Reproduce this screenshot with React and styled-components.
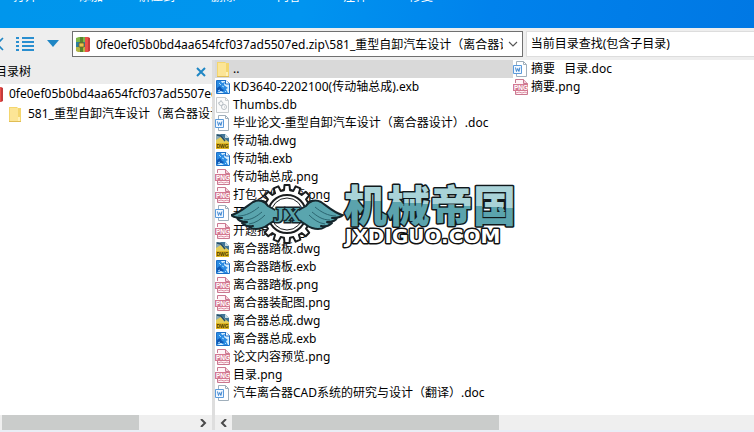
import { useState } from "react";
import styled, { createGlobalStyle } from "styled-components";

const ARCHIVE = "0fe0ef05b0bd4aa654fcf037ad5507ed.zip";
const FOLDER = "581_重型自卸汽车设计（离合器设计）";

const ACTIONS = ["打开", "添加", "解压到", "删除", "内容", "注释", "修复"];

const FILES = [
  { name: "..", type: "folder" },
  { name: "KD3640-2202100(传动轴总成).exb", type: "exb" },
  { name: "Thumbs.db", type: "db" },
  { name: "毕业论文-重型自卸汽车设计（离合器设计）.doc", type: "doc" },
  { name: "传动轴.dwg", type: "dwg" },
  { name: "传动轴.exb", type: "exb" },
  { name: "传动轴总成.png", type: "png" },
  { name: "打包文件预览.png", type: "png" },
  { name: "开题报告.doc", type: "doc" },
  { name: "开题报告.png", type: "png" },
  { name: "离合器踏板.dwg", type: "dwg" },
  { name: "离合器踏板.exb", type: "exb" },
  { name: "离合器踏板.png", type: "png" },
  { name: "离合器装配图.png", type: "png" },
  { name: "离合器总成.dwg", type: "dwg" },
  { name: "离合器总成.exb", type: "exb" },
  { name: "论文内容预览.png", type: "png" },
  { name: "目录.png", type: "png" },
  { name: "汽车离合器CAD系统的研究与设计（翻译）.doc", type: "doc" },
  { name: "摘要   目录.doc", type: "doc" },
  { name: "摘要.png", type: "png" },
];

export default function App() {
  const [path, setPath] = useState(`${ARCHIVE}\\${FOLDER}`);
  const [keyword, setKeyword] = useState("");
  const [selected, setSelected] = useState("..");

  return (
    <Window>
      <GlobalStyle />

      <ActionBar>
        {ACTIONS.map((label) => (
          <ActionButton key={label} type="button">{label}</ActionButton>
        ))}
      </ActionBar>

      <AddressRow>
        <NavGroup>
          <NavButton type="button" aria-label="后退" $width={8}><BackIcon /></NavButton>
          <NavButton type="button" aria-label="列表视图" $width={34}><ListIcon /></NavButton>
          <NavButton type="button" aria-label="视图选项" $width={22}><TriangleIcon /></NavButton>
        </NavGroup>
        <AddressBox>
          <ArchiveIcon />
          <AddressInput aria-label="地址" value={path} onChange={(e) => setPath(e.target.value)} />
          <DropButton type="button" aria-label="展开地址">
            <svg width="10" height="6" viewBox="0 0 10 6" fill="none">
              <path d="M1 1l4 4 4-4" stroke="#555" strokeWidth="1.1" />
            </svg>
          </DropButton>
        </AddressBox>
        <SearchInput
          aria-label="查找"
          placeholder="当前目录查找(包含子目录)"
          value={keyword}
          onChange={(e) => setKeyword(e.target.value)}
        />
      </AddressRow>

      <Body>
        <TreePane>
          <TreeHeader>
            <TreeTitle>目录树</TreeTitle>
            <CloseButton type="button" aria-label="关闭目录树">
              <svg width="10" height="10" viewBox="0 0 10 10">
                <path d="M1 1l8 8M9 1L1 9" stroke="#1f86c4" strokeWidth="2" />
              </svg>
            </CloseButton>
          </TreeHeader>
          <Tree>
            <TreeRow $level={0}><ArchiveIcon /><span>{ARCHIVE}</span></TreeRow>
            <TreeRow $level={1}><FileIcon type="folder" /><span>{FOLDER}</span></TreeRow>
          </Tree>
          <ScrollTrack>
            <Thumb $start={2} $size="64.6%" />
            <ArrowButton type="button" aria-label="向右滚动" $end><Chevron right /></ArrowButton>
          </ScrollTrack>
        </TreePane>

        <FilePane>
          <FileList>
            {FILES.map((f) => (
              <FileRow key={f.name} $active={f.name === selected} onClick={() => setSelected(f.name)}>
                <FileIcon type={f.type} />
                <FileName>{f.name}</FileName>
              </FileRow>
            ))}
          </FileList>
          <Watermark />
          <ScrollTrack>
            <ArrowButton type="button" aria-label="向左滚动"><Chevron /></ArrowButton>
            <Thumb $start={0} $size="49.6%" />
          </ScrollTrack>
        </FilePane>
      </Body>
    </Window>
  );
}

function BackIcon() {
  return (
    <svg width="8" height="14" viewBox="0 0 8 14" fill="none">
      <path d="M3 1L-3 7l6 6" stroke="#1f86c4" strokeWidth="1.6" />
    </svg>
  );
}

function ListIcon() {
  return (
    <svg width="18" height="14" viewBox="0 0 18 14" fill="#2a8fd0">
      <path d="M0 0h3v2H0zM6 0h12v2H6zM0 4h3v2H0zM6 4h12v2H6zM0 8h3v2H0zM6 8h12v2H6zM0 12h3v2H0zM6 12h12v2H6z" />
    </svg>
  );
}

function TriangleIcon() {
  return (
    <svg width="12" height="8" viewBox="0 0 12 8">
      <path d="M0 0h12L6 7z" fill="#1f86c4" />
    </svg>
  );
}

function Chevron({ right }) {
  return (
    <svg width="7" height="8" viewBox="0 0 7 8" fill="none">
      <path d={right ? "M1 0l4 4-4 4" : "M6 0L2 4l4 4"} stroke="#4a4a4a" strokeWidth="2" />
    </svg>
  );
}

function ArchiveIcon() {
  return (
    <IconSvg width="15" height="17" viewBox="0 0 15 17">
      <path d="M0 2l3-1h6v5H0z" fill="#7db548" />
      <path d="M0 6h9v5H0z" fill="#2e7f9c" />
      <path d="M0 11h9v5H2l-2-1z" fill="#b3b545" />
      <path d="M9 1h3v15H9z" fill="#ec4f49" />
      <path d="M12 1l2 1v13l-2 1z" fill="#c33b3b" />
      <path d="M4 1h3v15H4z" fill="#57822f" />
      <path d="M3 7h5v4H3z" fill="#e6c34d" stroke="#745b22" strokeWidth=".8" />
    </IconSvg>
  );
}

function FileIcon({ type }) {
  if (type === "folder") {
    return (
      <IconSvg width="16" height="16" viewBox="0 0 16 16">
        <path d="M2 1h8l1 1h3v14H2z" fill="#f4d66e" />
        <path d="M3 2h8v13H3z" fill="#fce596" />
        <path d="M11 11h2v4h-2z" fill="#fff1b8" />
        <path d="M2 15h12v1H2z" fill="#e0bd55" />
      </IconSvg>
    );
  }
  if (type === "exb") {
    return (
      <IconSvg width="16" height="16" viewBox="0 0 16 16">
        <path d="M1.500 1.500h9l4 3v10h-13z" fill="#d8efff" stroke="#1b6fc6" />
        <path d="M2 2h4l1 2 3-1-1 3 4 3-2 1 2 4H9l-3-2-4 2z" fill="#2b8be2" />
        <path d="M2 9l3-2 2 3 2 1-1 1H5l-3 1z" fill="#0d57b4" />
        <path d="M4 4l2 2M7 7l2 1M3 12l2-1M10 12l1 1" stroke="#a9deff" />
        <path d="M10.500 1v4h4" fill="#fff" stroke="#1b6fc6" />
      </IconSvg>
    );
  }
  if (type === "dwg") {
    return (
      <IconSvg width="16" height="16" viewBox="0 0 16 16">
        <path d="M1 1h9l4 4v6H1z" fill="#3f7597" />
        <path d="M1 1h4l9 9v1H1z" fill="#8caab5" />
        <path d="M1 7l5-3 8 5v2H1z" fill="#e5ce57" />
        <path d="M2 2l4 1 4 5" stroke="#234c6b" strokeWidth="1.500" fill="none" />
        <path d="M10 1l4 4h-4z" fill="#c9dbe2" />
        <path d="M1 10h13v6H1z" fill="#dfb722" />
        <text x="1.500" y="15" fontFamily="Liberation Sans" fontWeight="700" fontSize="5" fill="#4c3900">DWG</text>
      </IconSvg>
    );
  }
  if (type === "png") {
    return (
      <IconSvg width="16" height="16" viewBox="0 0 16 16">
        <path d="M2.500 4V.5h8l4 4V15.500h-12V12" fill="#fff4f7" stroke="#ca7890" />
        <path d="M10.500.5v4h4" fill="#f4ccd7" stroke="#ca7890" />
        <path d="M0 5h15v7H0z" fill="#d47991" />
        <text x="1" y="11" fontFamily="Liberation Sans" fontWeight="700" fontSize="6.500" fill="#fff">PNG</text>
        <path d="M3 14l3-1 3 1 3-1 2 1" stroke="#dd91a5" fill="none" />
      </IconSvg>
    );
  }
  if (type === "doc") {
    return (
      <IconSvg width="16" height="16" viewBox="0 0 16 16">
        <path d="M3.500.5h7l3 3v12h-10z" fill="#fff" stroke="#a0afbb" />
        <path d="M10.500.5v3h3" fill="none" stroke="#a0afbb" />
        <path d="M.5 4.500h8v8h-8z" fill="#f2f8ff" stroke="#5b9bdc" />
        <path d="M2.500 6.500l1 4 1.200-3 1.200 3 1-4" fill="none" stroke="#3f86d0" />
      </IconSvg>
    );
  }
  return (
    <IconSvg width="16" height="16" viewBox="0 0 16 16">
      <path d="M1.500.5h9l3 3v12h-12z" fill="#fbfbfb" stroke="#c8ccce" />
      <path d="M10.500.5v3h3" fill="none" stroke="#c8ccce" />
      <circle cx="6" cy="6.500" r="2" fill="none" stroke="#b9c0c6" />
      <circle cx="9" cy="10" r="2.500" fill="none" stroke="#b9c0c6" />
      <path d="M3 6h1M6 3v1M9 10h1" stroke="#b9c0c6" />
    </IconSvg>
  );
}

// outline of a toothed wheel around (cx, cy)
function gearPath(cx, cy, outer, inner, teeth) {
  const points = [];
  const step = (Math.PI * 2) / teeth;
  for (let i = 0; i < teeth; i++) {
    [[-0.32, inner], [-0.22, outer], [0.22, outer], [0.32, inner]].forEach(([k, r]) => {
      const a = (i + k) * step - Math.PI / 2;
      points.push(`${(cx + r * Math.cos(a)).toFixed(1)} ${(cy + r * Math.sin(a)).toFixed(1)}`);
    });
  }
  return `M${points.join("L")}Z`;
}

function Wing() {
  return (
    <>
      <path
        d="M1 34C10 31 16 25 22 21c6-3 12-1 15 4l9 5v10c-6-1-8 5-15 7-6 2-10 1-13-1 2 0 3-1 4-1-5 1-9-1-11-3 2 0 3 0 5-1-6 0-9-2-10-4h5c-5 0-9-1-11-3z"
        fill="#5aa5ae"
        stroke="#15262c"
        strokeWidth="2"
        strokeLinejoin="round"
      />
      <path d="M7 35c8 0 15-4 21-9M13 39c8 0 13-4 18-8M18 43c7-1 12-5 16-9" stroke="#2b6570" fill="none" />
    </>
  );
}

function Watermark() {
  return (
    <WatermarkSvg width="292" height="68" viewBox="0 0 292 68" role="img" aria-label="机械帝国 JXDIGUO.COM">
      <defs>
        <linearGradient id="title" gradientUnits="userSpaceOnUse" x1="202" y1="3" x2="200" y2="43">
          <stop offset="0.5" stopColor="#a9d3d8" />
          <stop offset="0.5" stopColor="#5ba3ad" />
        </linearGradient>
      </defs>
      <path d={gearPath(56, 33, 29, 24, 16)} fill="#fff" stroke="#1a1d1f" strokeWidth="2" strokeLinejoin="round" />
      <circle cx="56" cy="33" r="19" fill="#fff" stroke="#1a1d1f" strokeWidth="2" />
      <circle cx="56" cy="33" r="16" fill="none" stroke="#1a1d1f" strokeWidth="1" />
      <Wing />
      <g transform="matrix(-1 0 0 1 112 0)"><Wing /></g>
      <path d="M44 26h24v14H44z" fill="#5aa5ae" />
      <EmblemText x="56" y="41" textAnchor="middle">JX</EmblemText>
      <TitleText x="113" y="41">机械帝国</TitleText>
      <DomainText x="114" y="62">JXDIGUO.COM</DomainText>
    </WatermarkSvg>
  );
}

const GlobalStyle = createGlobalStyle`
  * { box-sizing: border-box; }
  body {
    margin: 0;
    overflow: hidden;
    background: #fff;
  }
  button, input {
    font: inherit;
    color: inherit;
  }
`;

const Window = styled.div`
  height: 100vh;
  display: flex;
  flex-direction: column;
  overflow: hidden;
  border-bottom: 2px solid #e9eef6;
  font-family: "Noto Sans", "Noto Sans CJK SC", sans-serif;
  font-size: 12px;
  line-height: 18px;
  color: #000;
`;

const ActionBar = styled.div`
  flex: none;
  height: 28px;
  display: flex;
  align-items: flex-start;
  overflow: hidden;
  background: linear-gradient(100deg, #0096ec 0%, #0094ef 40%, #0082ec 65%, #0078e4 100%);
`;

const ActionButton = styled.button`
  flex: none;
  width: 66px;
  height: 18px;
  margin-top: -12px;
  padding: 0;
  border: none;
  background: none;
  color: #fff;
  white-space: nowrap;
  cursor: pointer;

  &:first-child { margin-left: -8px; }
`;

const AddressRow = styled.div`
  flex: none;
  height: 32px;
  padding: 3px 0;
  display: flex;
  gap: 3px;
  background: #eee;
`;

const NavGroup = styled.div`
  width: 69px;
  display: flex;
  align-items: center;
`;

const NavButton = styled.button`
  width: ${({ $width }) => $width}px;
  padding: 0;
  display: flex;
  justify-content: center;
  border: none;
  background: none;
  cursor: pointer;
`;

const AddressBox = styled.div`
  flex: 2 1 12px;
  min-width: 0;
  padding-left: 3px;
  display: flex;
  align-items: center;
  gap: 5px;
  border: 1px solid #707070;
  background: #fff;
`;

const AddressInput = styled.input`
  flex: 1;
  min-width: 0;
  height: 22px;
  padding: 0;
  border: none;
  outline: none;
  background: none;
`;

const DropButton = styled.button`
  width: 14px;
  padding: 0;
  display: flex;
  border: none;
  background: none;
  cursor: pointer;
`;

const SearchInput = styled.input`
  flex: 1 1 0;
  min-width: 0;
  padding: 0 4px;
  border: 1px solid #ddd;
  border-right: none;
  outline: none;
  background: #fff;

  &::placeholder { color: #000; opacity: 1; }
`;

const Body = styled.div`
  flex: 1;
  min-height: 0;
  display: flex;
`;

const TreePane = styled.aside`
  flex: none;
  width: 215px;
  display: flex;
  flex-direction: column;
  overflow: hidden;
  border-right: 3px solid #dedede;
`;

const TreeHeader = styled.div`
  height: 24px;
  padding-right: 6px;
  display: flex;
  align-items: center;
  justify-content: space-between;
  background: #ececec;
`;

const TreeTitle = styled.span`
  margin-left: -5px;
`;

const CloseButton = styled.button`
  padding: 0;
  display: flex;
  border: none;
  background: none;
  cursor: pointer;
`;

const Tree = styled.ul`
  flex: 1;
  margin: 0;
  padding: 0;
  overflow: hidden;
  list-style: none;
`;

const TreeRow = styled.li`
  height: 20px;
  margin-left: ${({ $level }) => $level * 18 - 11}px;
  display: flex;
  align-items: center;
  gap: 5px;
  white-space: nowrap;
`;

const FilePane = styled.main`
  position: relative;
  flex: 1;
  min-width: 0;
  display: flex;
  flex-direction: column;
`;

const FileList = styled.ul`
  flex: 1;
  margin: 0;
  padding: 0;
  display: grid;
  grid-auto-flow: column;
  grid-template-rows: repeat(19, 18px);
  grid-auto-columns: 298px;
  overflow: hidden;
  list-style: none;
`;

const FileRow = styled.li`
  display: flex;
  align-items: center;
  gap: 2px;
  background: ${({ $active }) => ($active ? "#d9d9d9" : "transparent")};
`;

const FileName = styled.span`
  white-space: pre;
`;

const IconSvg = styled.svg`
  flex: none;
`;

const ScrollTrack = styled.div`
  flex: none;
  height: 15px;
  display: flex;
  background: #efefef;
`;

const Thumb = styled.div`
  width: ${({ $size }) => $size};
  margin-left: ${({ $start }) => $start}px;
  background: #cacccb;
`;

const ArrowButton = styled.button`
  width: 17px;
  margin-left: ${({ $end }) => ($end ? "auto" : "0")};
  padding: 0;
  display: flex;
  align-items: center;
  justify-content: center;
  border: none;
  background: none;
`;

const WatermarkSvg = styled.svg`
  position: absolute;
  top: 121px;
  left: 16px;
  pointer-events: none;
`;

const EmblemText = styled.text`
  font: 700 22px "Liberation Serif", serif;
  fill: #5aa5ae;
  stroke: #15262c;
  stroke-width: 3px;
  paint-order: stroke;
`;

const TitleText = styled.text`
  font: 900 43px "Noto Sans CJK SC", sans-serif;
  fill: url(#title);
  stroke: #10181b;
  stroke-width: 3px;
  stroke-linejoin: round;
  paint-order: stroke;
`;

const DomainText = styled.text`
  font: 700 20px "DejaVu Sans", sans-serif;
  fill: #fff;
  stroke: #111;
  stroke-width: 3px;
  stroke-linejoin: round;
  paint-order: stroke;
`;
